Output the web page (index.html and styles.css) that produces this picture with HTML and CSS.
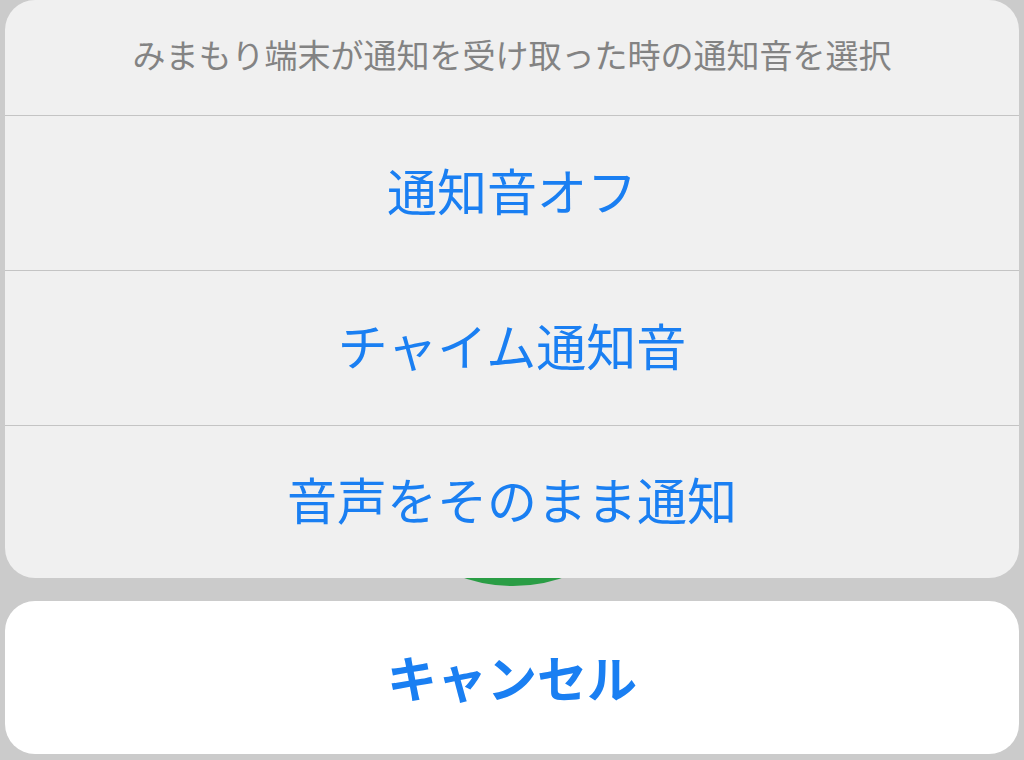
FILE: index.html
```html
<!DOCTYPE html>
<html lang="ja">
<head>
<meta charset="UTF-8" />
<meta name="viewport" content="width=device-width, initial-scale=1" />
<title>通知音を選択</title>
<link rel="stylesheet" href="styles.css">
</head>
<body>

<!-- Background button peeking from behind the sheet -->
<div class="bgCircle"></div>

<div class="actionSheet">
  <!-- Option group -->
  <div class="sheetGroup">
    <div class="sheetTitle">みまもり端末が通知を受け取った時の通知音を選択</div>
    <button class="sheetOption">通知音オフ</button>
    <button class="sheetOption">チャイム通知音</button>
    <button class="sheetOption">音声をそのまま通知</button>
  </div>

  <!-- Cancel -->
  <button class="sheetCancel">キャンセル</button>
</div>

</body>
</html>
```

FILE: styles.css
```css
body {
  margin: 0;
  background-color: #cbcbcb;
  font-family: "Noto Sans CJK JP", "Noto Sans", sans-serif;
  height: 760px;
  overflow: hidden;
  position: relative;
}

/* green circle behind the sheet */
.bgCircle {
  position: absolute;
  left: 355px;
  top: 266px;
  width: 316px;
  height: 320px;
  border-radius: 50%;
  background-color: #2a9d45;
  z-index: 0;
}

.actionSheet {
  position: relative;
  z-index: 1;
  padding: 0 5px;
  display: flex;
  flex-direction: column;
  gap: 23px;
}

.sheetGroup {
  background-color: #f0f0f0;
  border-radius: 30px;
  overflow: hidden;
  display: flex;
  flex-direction: column;
}

.sheetTitle {
  height: 115px;
  display: flex;
  align-items: center;
  justify-content: center;
  color: #838383;
  font-size: 33px;
  padding-bottom: 8px;
  box-sizing: border-box;
}

.sheetOption {
  height: 155px;
  box-sizing: border-box;
  border: none;
  border-top: 1px solid #c4c4c4;
  background: none;
  font-family: inherit;
  font-size: 50px;
  color: #1a7ff2;
  display: flex;
  align-items: center;
  justify-content: center;
  padding: 0 0 8px;
  cursor: pointer;
}

.sheetOption:last-child {
  height: 153px;
}

.sheetCancel {
  height: 153px;
  border: none;
  border-radius: 30px;
  background-color: #ffffff;
  font-family: inherit;
  font-size: 50px;
  font-weight: bold;
  color: #1a7ff2;
  padding: 0 0 4px;
  cursor: pointer;
}
```
